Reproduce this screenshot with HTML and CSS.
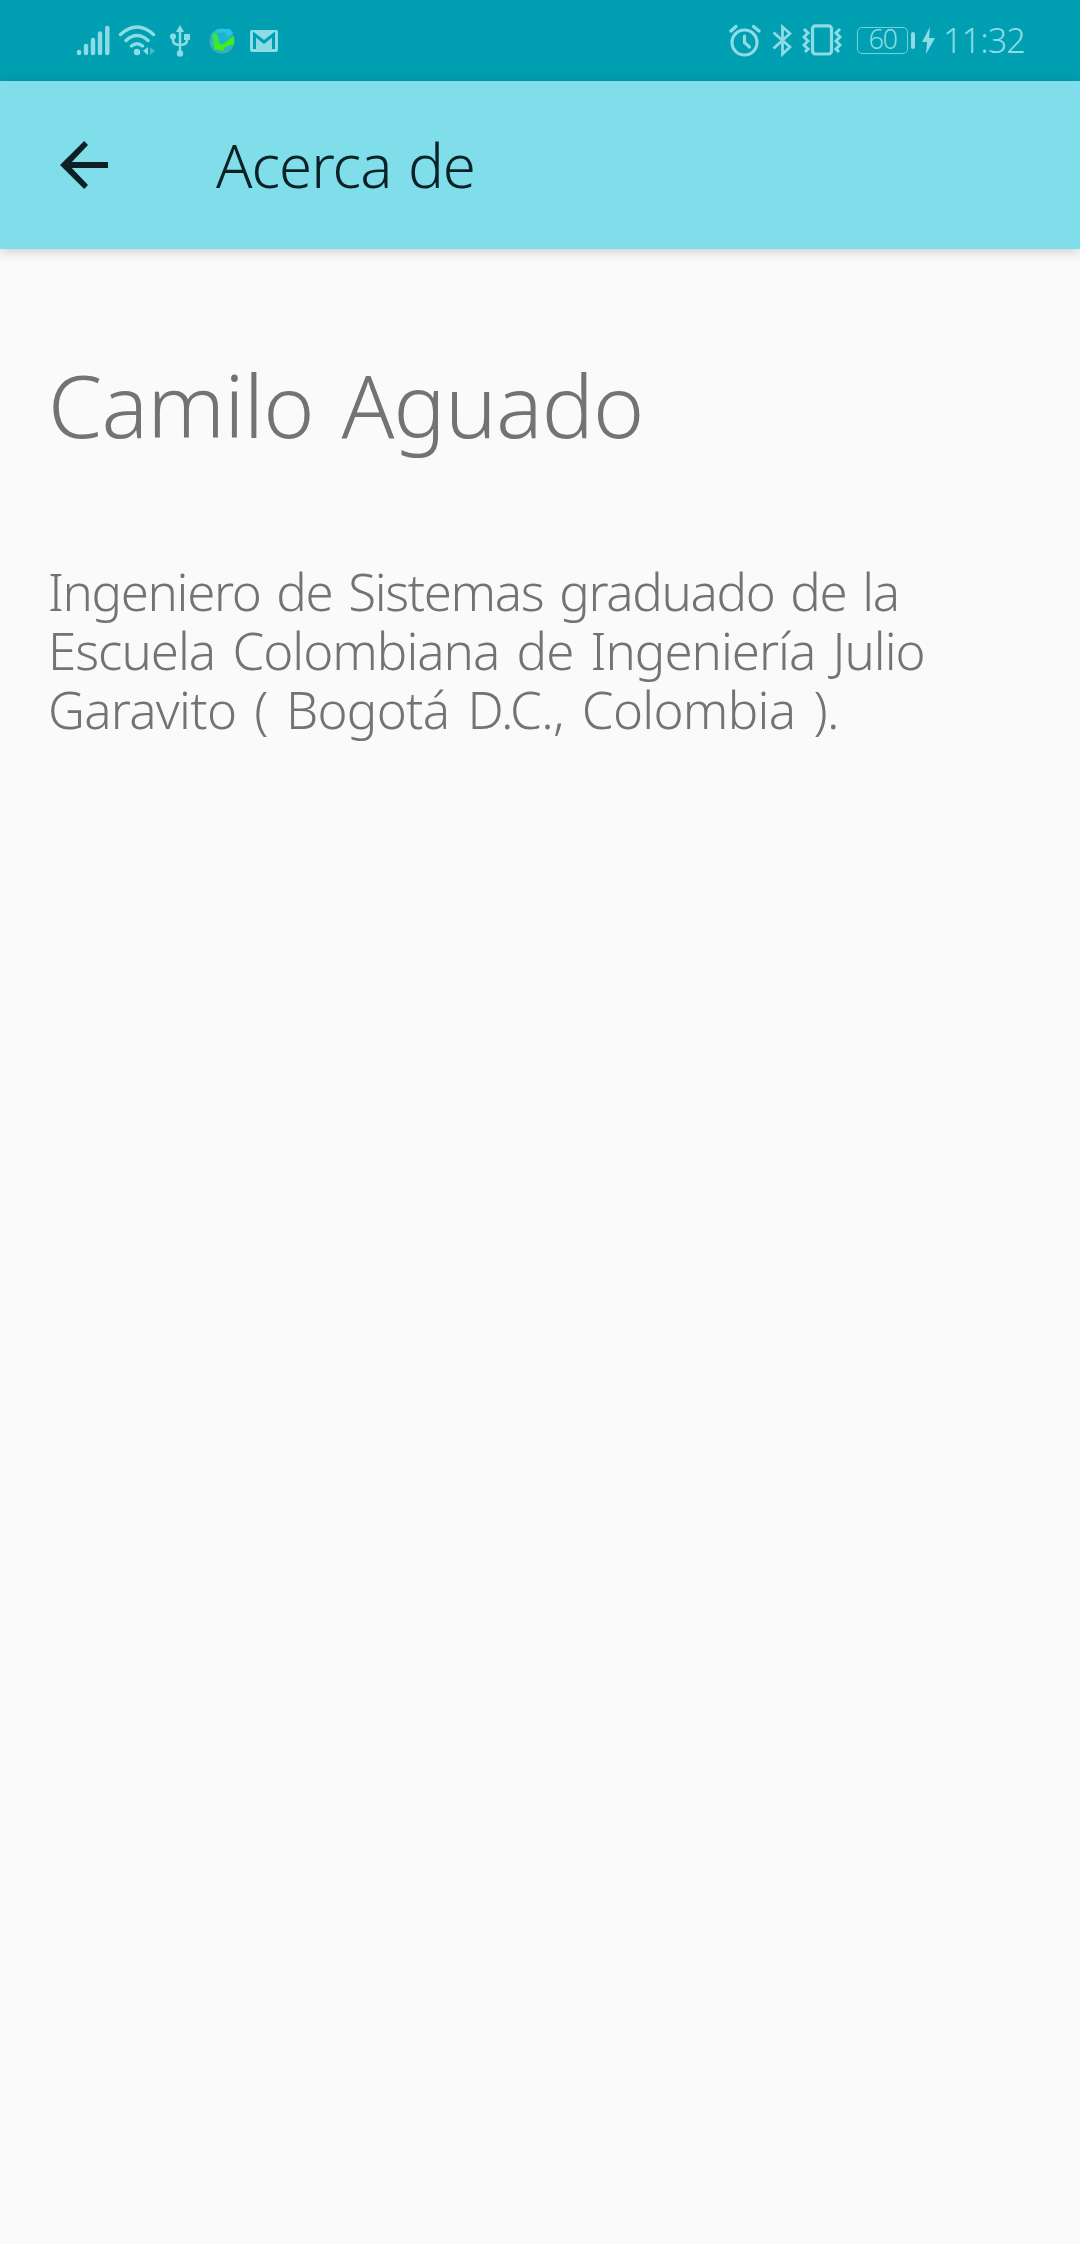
FILE: index.html
```html
<!DOCTYPE html>
<html lang="es">
<head>
<meta charset="utf-8">
<title>Acerca de</title>
<link rel="stylesheet" href="styles.css">
</head>
<body>
<header class="status-bar">
  <div class="status-left">
    <svg class="icon" width="34" height="32" viewBox="0 0 34 32"><g stroke="#8ddce5" stroke-width="4.4" stroke-linecap="round"><path d="M3 28v1M10 22v7M17 16v13M24 9.500v19.500M31.300 4v25"/></g></svg>
    <svg class="icon wifi" width="38" height="32" viewBox="0 0 38 32"><g fill="none" stroke="#8ddce5" stroke-width="3.400" stroke-linecap="round"><path d="M2.500 10.500Q19-4.500 35.500 10.500M8 16.500Q19 6.500 30 16.500M13.500 22Q19 17.500 24.500 22"/></g><circle cx="19" cy="28" r="3.200" fill="#8ddce5"/><path d="M30 23v8l-5-4z" fill="#8ddce5"/><path d="M32 23v8l5-4z" fill="#44b9c6"/></svg>
    <svg class="icon usb" width="22" height="32" viewBox="0 0 22 32"><g fill="#8ddce5"><path d="M11 0l4 7H7z"/><circle cx="11" cy="28.500" r="3.200"/><circle cx="4" cy="11.500" r="3"/><path d="M15 9h6v6h-6z"/></g><path d="M11 5v22M4 12v3q0 5 7 5t7-5v-3" fill="none" stroke="#8ddce5" stroke-width="2.500"/></svg>
    <svg class="icon globe" width="28" height="30" viewBox="0 0 28 30"><circle cx="14" cy="15" r="13.300" fill="#2fb2b8" stroke="#168f9c"/><path d="M4 8l6-5h12l3 4-5 4-3-5-9 1z" fill="#1cc9ee"/><path d="M4 7l5 2 1 8-4 4z" fill="#27d8a8"/><path d="M4 7l5 1 3 10-5 4-2-4 2-4z" fill="#35ea35"/><path d="M12 8l3-1 5 7-8 3z" fill="#12b8dc"/><path d="M10 17l4 2 12-9v8l-9 3-2 4-9-2 1-3z" fill="#3df01e"/></svg>
    <svg class="icon mail" width="28" height="22" viewBox="0 0 28 22"><rect width="28" height="22" rx="2" fill="#8ddce5"/><path d="M4.500 19V4.500L14 12l9.500-7.500V19" fill="none" stroke="#009fb1" stroke-width="3"/></svg>
  </div>
  <div class="status-right">
    <svg class="icon" width="32" height="34" viewBox="0 0 32 34"><g fill="none" stroke="#8ddce5" stroke-linecap="round"><circle cx="15.500" cy="18.500" r="12.500" stroke-width="3.200"/><path d="M15.500 12v6.500l5 4.500" stroke-width="3.200"/><path d="M2 7l5-4.500M24.500 2.500L30 7" stroke-width="3.200"/></g></svg>
    <svg class="icon bluetooth" width="20" height="34" viewBox="0 0 20 34"><path d="M1.500 8.500L18 23l-7.500 7V3L18 9.500 1.500 24.500" fill="none" stroke="#8ddce5" stroke-width="2.800"/></svg>
    <svg class="icon vibrate" width="40" height="34" viewBox="0 0 40 34"><g fill="none" stroke="#8ddce5"><rect x="10.500" y="1.800" width="19" height="28.200" rx="3" stroke-width="3.200"/><path d="M2 5l4 4-4 4 4 4-4 4 4 4-3 3M38 5l-4 4 4 4-4 4 4 4-4 4 3 3" stroke-width="3"/></g></svg>
    <div class="battery"><span class="battery-level">60</span></div>
    <div class="battery-tip"></div>
    <svg class="icon bolt" width="13" height="27" viewBox="0 0 13 27"><path d="M8 0L0 15h5L4 27l9-16H7z" fill="#8ddce5"/></svg>
    <span class="clock">11:32</span>
  </div>
</header>
<nav class="toolbar">
  <svg class="back" width="48" height="48" viewBox="0 0 48 48"><path d="M48 21H11.800L28 4 24.200 0 0 24l24.200 24 3.800-4L11.800 27H48z" fill="#0e2023"/></svg>
  <h1 class="title">Acerca de</h1>
</nav>
<main class="content">
  <h2 class="name">Camilo Aguado</h2>
  <p class="bio"><span class="line first">Ingeniero de Sistemas graduado de la</span> <span class="line second">Escuela Colombiana de Ingeniería Julio</span> <span class="line third">Garavito ( Bogotá D.C., Colombia ).</span></p>
</main>
</body>
</html>
```
FILE: styles.css
```css
body {
  margin: 0;
  min-height: 2244px;
  background: #fafafa;
  color: #737373;
  font-family: "Noto Sans", sans-serif;
  font-weight: 300;
}
.status-bar {
  box-sizing: border-box;
  height: 81px;
  padding: 0 55px 0 76px;
  background: #009fb1;
  color: #8ddce5;
  display: flex;
  justify-content: space-between;
}
.status-left, .status-right { display: flex; align-items: flex-start; }
.icon { flex: none; display: block; margin-top: 24px; }
.wifi { margin-left: 8px; }
.usb { margin: 25px 0 0 13px; }
.globe { margin: 26px 0 0 17px; }
.mail { margin: 30px 0 0 14px; }
.bluetooth { margin-left: 11px; }
.vibrate { margin-left: 10px; }
.battery {
  box-sizing: border-box;
  width: 51px;
  height: 27px;
  margin: 27px 0 0 15px;
  border: 1px solid #75d0db;
  border-radius: 5px;
  display: flex;
  justify-content: center;
  align-items: flex-start;
}
.battery-level { margin-top: -1px; font-size: 27px; line-height: 24px; letter-spacing: -1.5px; }
.battery-tip { width: 4px; height: 17px; margin: 32px 0 0 3px; border-radius: 2px; background: #8ddce5; }
.bolt { margin: 27px 0 0 7px; }
.clock { width: 82px; margin: 15px 0 0 8px; font-size: 34px; line-height: 50px; white-space: nowrap; letter-spacing: -.8px; }
.toolbar {
  box-sizing: border-box;
  height: 168px;
  padding: 0 60px;
  background: #80deea;
  box-shadow: 0 2px 12px rgba(0, 0, 0, .2);
  color: #0a2225;
  display: flex;
  align-items: center;
}
.title { margin: 0 0 0 108px; font-size: 60px; line-height: 80px; font-weight: 300; letter-spacing: -1px; word-spacing: 2px; }
.content { padding: 95px 48px 0; }
.name { margin: 0; font-size: 87px; line-height: 120px; font-weight: 300; white-space: nowrap; letter-spacing: -.8px; word-spacing: 6px; }
.bio { margin: 98px 0 0; font-size: 51px; line-height: 59px; }
.line { display: block; white-space: nowrap; }
.first { letter-spacing: -1.35px; word-spacing: 4px; }
.second { letter-spacing: -1px; word-spacing: 5px; }
.third { letter-spacing: -.7px; word-spacing: 5.5px; }
.back { display: block; flex: none; margin-top: -1px; }
```
